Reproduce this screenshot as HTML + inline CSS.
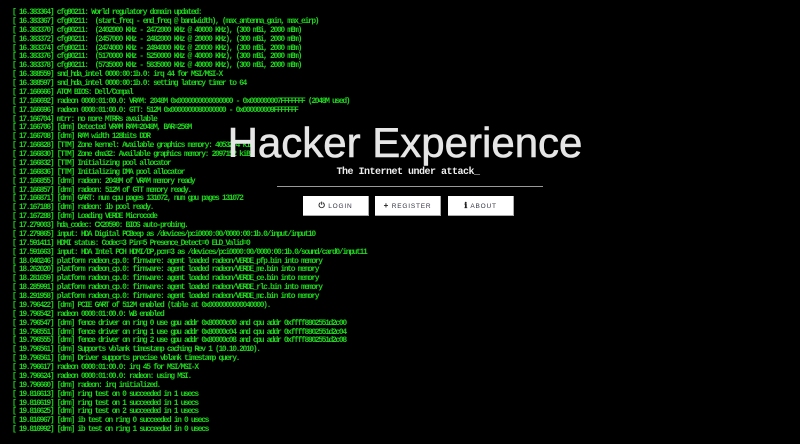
<!DOCTYPE html>
<html><head><meta charset="utf-8"><style>
html,body{margin:0;padding:0;background:#000;width:800px;height:444px;overflow:hidden}
#log{position:absolute;left:12px;top:9px;font-family:"Liberation Mono",monospace;font-size:8px;letter-spacing:-1.36px;line-height:8.88px;color:#1ed41e;white-space:pre;font-weight:bold}
h1{position:absolute;left:0;width:810px;top:119px;margin:0;text-align:center;font-family:"Liberation Sans",sans-serif;font-weight:normal;font-size:42px;color:#e6e6e6;-webkit-text-stroke:0.6px #e6e6e6}
.sub{position:absolute;left:0;width:816px;top:167px;text-align:center;font-family:"Liberation Mono",monospace;font-weight:bold;font-size:10px;color:#eee;letter-spacing:-0.5px}
.hr{position:absolute;left:277px;width:266px;top:186px;height:1px;background:#999}
.btn{position:absolute;top:196px;width:65px;height:19px;background:#fff;border-right:1px solid #aaa;border-bottom:1px solid #aaa;font-family:"Liberation Sans",sans-serif;font-size:6.5px;letter-spacing:0.8px;color:#334;text-align:center;line-height:19px}
.btn b{font-size:8px;color:#222}
</style></head><body>
<div id="log">[ 16.383364] cfg80211: World regulatory domain updated:
[ 16.383367] cfg80211:  (start_freq - end_freq @ bandwidth), (max_antenna_gain, max_eirp)
[ 16.383370] cfg80211:  (2402000 KHz - 2472000 KHz @ 40000 KHz), (300 mBi, 2000 mBm)
[ 16.383372] cfg80211:  (2457000 KHz - 2482000 KHz @ 20000 KHz), (300 mBi, 2000 mBm)
[ 16.383374] cfg80211:  (2474000 KHz - 2494000 KHz @ 20000 KHz), (300 mBi, 2000 mBm)
[ 16.383376] cfg80211:  (5170000 KHz - 5250000 KHz @ 40000 KHz), (300 mBi, 2000 mBm)
[ 16.383378] cfg80211:  (5735000 KHz - 5835000 KHz @ 40000 KHz), (300 mBi, 2000 mBm)
[ 16.388559] snd_hda_intel 0000:00:1b.0: irq 44 for MSI/MSI-X
[ 16.388597] snd_hda_intel 0000:00:1b.0: setting latency timer to 64
[ 17.166666] ATOM BIOS: Dell/Compal
[ 17.166692] radeon 0000:01:00.0: VRAM: 2048M 0x0000000000000000 - 0x000000007FFFFFFF (2048M used)
[ 17.166696] radeon 0000:01:00.0: GTT: 512M 0x0000000080000000 - 0x000000009FFFFFFF
[ 17.166704] mtrr: no more MTRRs available
[ 17.166706] [drm] Detected VRAM RAM=2048M, BAR=256M
[ 17.166708] [drm] RAM width 128bits DDR
[ 17.166828] [TTM] Zone kernel: Available graphics memory: 4053274 kiB
[ 17.166830] [TTM] Zone dma32: Available graphics memory: 2097152 kiB
[ 17.166832] [TTM] Initializing pool allocator
[ 17.166836] [TTM] Initializing DMA pool allocator
[ 17.166855] [drm] radeon: 2048M of VRAM memory ready
[ 17.166857] [drm] radeon: 512M of GTT memory ready.
[ 17.166871] [drm] GART: num cpu pages 131072, num gpu pages 131072
[ 17.167188] [drm] radeon: ib pool ready.
[ 17.167288] [drm] Loading VERDE Microcode
[ 17.279003] hda_codec: CX20590: BIOS auto-probing.
[ 17.279865] input: HDA Digital PCBeep as /devices/pci0000:00/0000:00:1b.0/input/input10
[ 17.591411] HDMI status: Codec=3 Pin=5 Presence_Detect=0 ELD_Valid=0
[ 17.591663] input: HDA Intel PCH HDMI/DP,pcm=3 as /devices/pci0000:00/0000:00:1b.0/sound/card0/input11
[ 18.040246] platform radeon_cp.0: firmware: agent loaded radeon/VERDE_pfp.bin into memory
[ 18.262020] platform radeon_cp.0: firmware: agent loaded radeon/VERDE_me.bin into memory
[ 18.281659] platform radeon_cp.0: firmware: agent loaded radeon/VERDE_ce.bin into memory
[ 18.285991] platform radeon_cp.0: firmware: agent loaded radeon/VERDE_rlc.bin into memory
[ 18.291958] platform radeon_cp.0: firmware: agent loaded radeon/VERDE_mc.bin into memory
[ 19.796422] [drm] PCIE GART of 512M enabled (table at 0x0000000000040000).
[ 19.796542] radeon 0000:01:00.0: WB enabled
[ 19.796547] [drm] fence driver on ring 0 use gpu addr 0x80000c00 and cpu addr 0xffff8802551d2c00
[ 19.796551] [drm] fence driver on ring 1 use gpu addr 0x80000c04 and cpu addr 0xffff8802551d2c04
[ 19.796555] [drm] fence driver on ring 2 use gpu addr 0x80000c08 and cpu addr 0xffff8802551d2c08
[ 19.796561] [drm] Supports vblank timestamp caching Rev 1 (10.10.2010).
[ 19.796561] [drm] Driver supports precise vblank timestamp query.
[ 19.796617] radeon 0000:01:00.0: irq 45 for MSI/MSI-X
[ 19.796624] radeon 0000:01:00.0: radeon: using MSI.
[ 19.796660] [drm] radeon: irq initialized.
[ 19.816613] [drm] ring test on 0 succeeded in 1 usecs
[ 19.816619] [drm] ring test on 1 succeeded in 1 usecs
[ 19.816625] [drm] ring test on 2 succeeded in 1 usecs
[ 19.816967] [drm] ib test on ring 0 succeeded in 0 usecs
[ 19.816992] [drm] ib test on ring 1 succeeded in 0 usecs</div>
<h1>Hacker Experience</h1>
<div class="sub">The Internet under attack_</div>
<div class="hr"></div>
<div class="btn" style="left:303px"><b>&#x23FB;</b> LOGIN</div>
<div class="btn" style="left:375px"><b>+</b> REGISTER</div>
<div class="btn" style="left:448px"><b>&#x2139;</b> ABOUT</div>
</body></html>
